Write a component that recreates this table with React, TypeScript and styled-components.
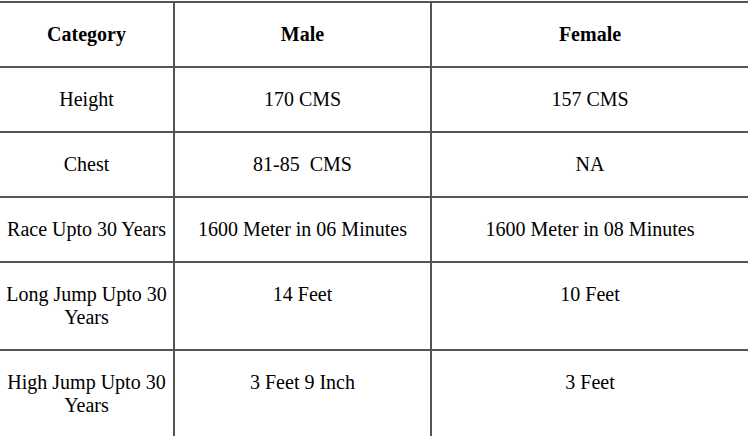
import React from 'react';
import styled, { createGlobalStyle } from 'styled-components';

const GlobalStyle = createGlobalStyle`
  html, body {
    margin: 0;
    padding: 0;
    background: #ffffff;
  }
  body {
    font-family: "Liberation Serif", "Times New Roman", serif;
    color: #000000;
    overflow: hidden;
  }
`;

const Wrapper = styled.div`
  padding-top: 1px;
  margin-left: -2px;
  width: 752px;
`;

const Table = styled.table`
  width: 100%;
  border-collapse: collapse;
  table-layout: fixed;
  font-family: "Liberation Serif", "Times New Roman", serif;
`;

const Cell = styled.td<{ $head?: boolean }>`
  border: 2px solid #555555;
  padding: 20px 4px;
  text-align: center;
  vertical-align: top;
  font-family: "Liberation Serif", "Times New Roman", serif;
  font-size: 20px;
  line-height: 23px;
  color: #000000;
  font-weight: ${p => (p.$head ? 700 : 400)};
`;

const rows: string[][] = [
  ['Height', '170 CMS', '157 CMS'],
  ['Chest', '81-85\u00a0 CMS', 'NA'],
  ['Race Upto 30 Years', '1600 Meter in 06 Minutes', '1600 Meter in 08 Minutes'],
  ['Long Jump Upto 30 Years', '14 Feet', '10 Feet'],
  ['High Jump Upto 30 Years', '3 Feet 9 Inch', '3 Feet'],
];

export default function App() {
  return (
    <>
      <GlobalStyle />
      <Wrapper>
        <Table>
          <colgroup>
            <col style={{ width: 175 }} />
            <col style={{ width: 257 }} />
            <col />
          </colgroup>
          <thead>
            <tr>
              <Cell as="th" $head>Category</Cell>
              <Cell as="th" $head>Male</Cell>
              <Cell as="th" $head>Female</Cell>
            </tr>
          </thead>
          <tbody>
            {rows.map(r => (
              <tr key={r[0]}>
                {r.map((c, i) => (
                  <Cell key={i}>{c}</Cell>
                ))}
              </tr>
            ))}
          </tbody>
        </Table>
      </Wrapper>
    </>
  );
}
